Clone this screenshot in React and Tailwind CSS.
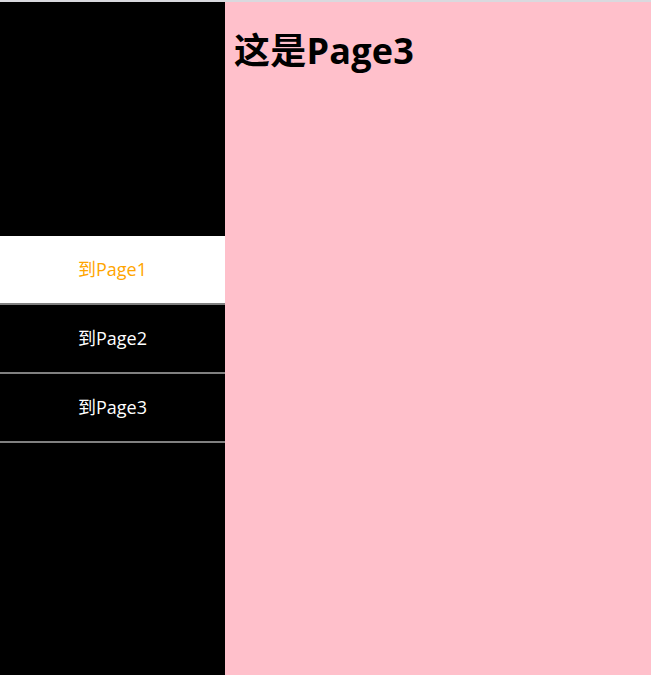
export default function App() {
  const items = ["到Page1", "到Page2", "到Page3"];
  const active = 0;

  return (
    <div
      className="flex flex-col h-[675px] w-full"
      style={{ fontFamily: '"Open Sans", "Noto Sans CJK SC", sans-serif' }}
    >
      <div className="h-[2px] bg-[#d9d9de]" />
      <div className="flex flex-1">
        <div className="w-[225px] bg-black flex flex-col justify-center pt-[2px]">
          {items.map((label, i) => (
            <div
              key={label}
              className={`h-[69px] flex items-center justify-center border-b-2 border-[#808080] text-[18px] ${
                i === active ? "bg-white text-[#ffa500]" : "text-white"
              }`}
            >
              {label}
            </div>
          ))}
        </div>
        <div className="flex-1 bg-[#ffc0cb] px-[9px]">
          <h1 className="text-[36px] font-bold text-black mt-[24px] leading-[50px] tracking-[0.2px]">
            这是Page3
          </h1>
        </div>
      </div>
    </div>
  );
}
